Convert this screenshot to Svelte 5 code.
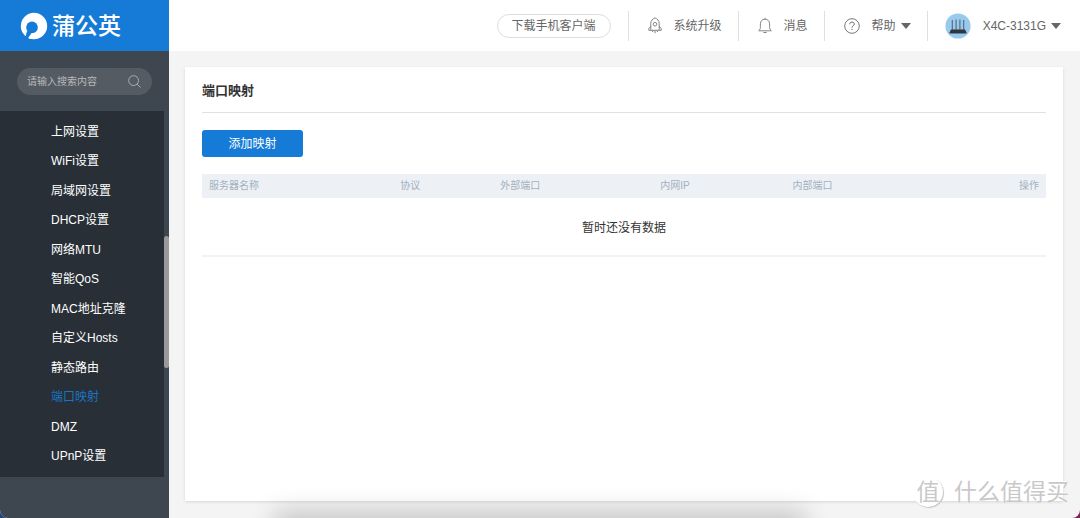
<script>
    let keyword = $state("")
    let active = $state("端口映射")

    const menu = [
        "上网设置", "WiFi设置", "局域网设置", "DHCP设置", "网络MTU", "智能QoS",
        "MAC地址克隆", "自定义Hosts", "静态路由", "端口映射", "DMZ", "UPnP设置"
    ]

    const columns = [
        { title: "服务器名称", key: "name" },
        { title: "协议", key: "protocol" },
        { title: "外部端口", key: "outer" },
        { title: "内网IP", key: "ip" },
        { title: "内部端口", key: "inner" },
        { title: "操作", key: "action" }
    ]
</script>

<div class="app">
    <aside class="sidebar">
        <a class="logo" href="#home">
            <svg viewBox="0 0 28 28" width="28" height="28">
                <circle cx="14" cy="14" r="13.2" fill="#fff" />
                <path d="M6.6 28 L5.6 24.4 L7 19 L12 20.5 L10.2 23 L8.6 25.2 L8 28 Z" fill="#157bd7" />
                <circle cx="12" cy="15.4" r="5.8" fill="#157bd7" />
                <path d="M8.2 26 C10.6 25 11.8 23.4 11.9 21.1 L15 21 L14 26 L10 27 Z" fill="#fff" />
            </svg>
            <span>蒲公英</span>
        </a>

        <form class="search" onsubmit={e => e.preventDefault()}>
            <input type="text" placeholder="请输入搜索内容" aria-label="搜索" bind:value={keyword} />
            <button type="submit" aria-label="搜索">
                <svg viewBox="0 0 13 13" width="13" height="13" fill="none" stroke="#a9adb1">
                    <circle cx="5.6" cy="5.6" r="4.9" />
                    <path d="M9.1 9.1 L12.5 12.5" />
                </svg>
            </button>
        </form>

        <ul class="menu">
            {#each menu as item}
                <li>
                    <a href="#{item}" class:active={active === item} onclick={() => active = item}>{item}</a>
                </li>
            {/each}
        </ul>
        <div class="scroll-thumb"></div>
    </aside>

    <div class="content">
        <header class="topbar">
            <button class="download">下载手机客户端</button>
            <a class="item" href="#upgrade">
                <svg viewBox="0 0 14 17" width="14" height="17" fill="none" stroke="#777" stroke-width="0.9">
                    <path d="M2.8 12.9 V6.3 C2.8 3.8 4.8 1.8 7 0.9 C9.2 1.8 11.2 3.8 11.2 6.3 V12.9" />
                    <path d="M2.8 9.2 L0.8 11.5 V13.3 H13.2 V11.5 L11.2 9.2" />
                    <circle cx="7" cy="7.2" r="1.8" />
                    <path d="M4.6 13.5 V15 M7 13.5 V16.3 M9.4 13.5 V15" />
                </svg>
                <span>系统升级</span>
            </a>
            <a class="item" href="#message">
                <svg viewBox="0 0 14 17" width="14" height="17" fill="none" stroke="#777" stroke-width="0.9">
                    <path d="M0.6 13.8 H13.4 M0.8 13.6 C2.2 12.6 2.4 11.4 2.4 9.4 V6.8 C2.4 4 4.4 2.2 7 2.2 C9.6 2.2 11.6 4 11.6 6.8 V9.4 C11.6 11.4 11.8 12.6 13.2 13.6" />
                    <path d="M7 0.8 V2.2 M5.4 15.5 H8.6" />
                </svg>
                <span>消息</span>
            </a>
            <button class="item">
                <svg viewBox="0 0 16 16" width="16" height="16" fill="none" stroke="#666">
                    <circle cx="8" cy="8" r="7.3" stroke-width="0.9" />
                    <path d="M5.7 6.3 C5.7 4.9 6.7 4.1 8 4.1 C9.4 4.1 10.3 4.9 10.3 6.1 C10.3 7.6 8 7.8 8 9.6 M8 10.8 V12" />
                </svg>
                <span>帮助</span>
                <i class="caret"></i>
            </button>
            <button class="item device">
                <svg viewBox="0 0 26 26" width="26" height="26">
                    <circle cx="13" cy="13" r="12.6" fill="#98caee" />
                    <path d="M7.3 7 V17 M11.1 6.6 V17 M14.9 6.6 V17 M18.7 7 V17" stroke="#53697c" stroke-width="1.1" />
                    <path d="M6 16.5 H20 L21.4 19.2 V20.6 H4.6 V19.2 Z" fill="#30363e" />
                </svg>
                <span>X4C-3131G</span>
                <i class="caret"></i>
            </button>
        </header>

        <main class="panel">
            <h1>端口映射</h1>
            <button class="add">添加映射</button>
            <table>
                <thead>
                    <tr>
                        {#each columns as col}
                            <th class={col.key}>{col.title}</th>
                        {/each}
                    </tr>
                </thead>
                <tbody>
                    <tr>
                        <td colspan={columns.length}>暂时还没有数据</td>
                    </tr>
                </tbody>
            </table>
        </main>
    </div>

    <div class="dock-shadow"></div>
    <div class="watermark">
        <span class="badge">值</span>
        <span>什么值得买</span>
    </div>
</div>

<style>
    :global(body){
        background: linear-gradient(90deg, #1d4480 50%, #7b2450 50%);
    }
    .app{
        position: relative;
        display: flex;
        min-height: 100vh;
        overflow: hidden;
        border-radius: 0 0 8px 8px;
        background-color: #f4f4f4;
        color: #666;
        font-family: "Liberation Sans", "Noto Sans CJK SC", sans-serif;
        font-size: 12px;
    }
    a{
        color: inherit;
        text-decoration: none;
    }
    button, input{
        padding: 0;
        border: none;
        background: none;
        color: inherit;
        font: inherit;
    }
    button{
        cursor: pointer;
    }
    svg{
        flex: none;
    }

    .sidebar{
        position: relative;
        flex: none;
        width: 169px;
        background-color: #3e464f;
    }
    .logo{
        display: flex;
        align-items: center;
        gap: 4px;
        height: 51px;
        padding-left: 20px;
        background-color: #157bd7;
        color: white;
        font-size: 23px;
        font-weight: 500;
        line-height: 32px;
    }
    .search{
        display: flex;
        align-items: center;
        height: 27px;
        margin: 17px 17px 16px;
        padding: 0 11px 0 10px;
        box-sizing: border-box;
        border-radius: 14px;
        background-color: #545b63;
        font-size: 10px;
    }
    .search input{
        flex: 1;
        min-width: 0;
        outline: none;
        color: white;
    }
    .search input::placeholder{
        color: #b6b9bc;
        opacity: 1;
    }
    .search button{
        display: flex;
    }
    .menu{
        display: grid;
        grid-auto-rows: 1fr;
        min-height: 366px;
        margin: 0 5px 0 0;
        padding: 6px 0;
        box-sizing: border-box;
        list-style: none;
        background-color: #282f36;
        color: white;
    }
    .menu li{
        display: flex;
        align-items: center;
        padding-left: 51px;
        line-height: 16px;
    }
    .menu .active{
        color: #1a75c6;
    }
    .scroll-thumb{
        position: absolute;
        top: 236px;
        right: 0;
        width: 5px;
        height: 132px;
        border-radius: 3px;
        background-color: #9a9a9a;
    }

    .content{
        flex: 1;
        min-width: 0;
        display: flex;
        flex-direction: column;
    }
    .topbar{
        display: flex;
        align-items: center;
        justify-content: flex-end;
        height: 51px;
        background-color: white;
        line-height: 16px;
    }
    .download{
        height: 24px;
        margin-right: 17px;
        padding: 0 14px;
        border: 1px solid #dedede;
        border-radius: 12px;
    }
    .item{
        display: flex;
        align-items: center;
        gap: 12px;
        height: 30px;
        padding: 0 16px 0 19px;
        border-left: 1px solid #e0e0e0;
        white-space: nowrap;
    }
    .device{
        padding: 0 19px 0 17px;
    }
    .caret{
        margin-left: -7px;
        border: 5px solid transparent;
        border-top: 6px solid #666;
        border-bottom: none;
    }

    .panel{
        flex: 1;
        margin: 16px 17px 17px 16px;
        padding: 0 17px;
        background-color: white;
        box-shadow: 0 1px 3px rgba(0, 0, 0, 0.12);
    }
    h1{
        margin: 0 0 17px;
        padding: 14px 0 11px;
        border-bottom: 1px solid #e1e1e1;
        color: #333;
        font-size: 13px;
        line-height: 20px;
    }
    .add{
        display: block;
        width: 101px;
        height: 27px;
        margin-bottom: 17px;
        border-radius: 3px;
        background-color: #157bd7;
        color: white;
        line-height: 16px;
    }
    table{
        width: 100%;
        table-layout: fixed;
        border-collapse: collapse;
    }
    th{
        height: 21px;
        padding: 0 7px 3px;
        background-color: #edf1f6;
        color: #a3b0be;
        font-size: 10px;
        font-weight: normal;
        text-align: left;
    }
    .name{
        width: 21%;
    }
    .protocol{
        width: 10.2%;
    }
    .outer{
        width: 17.3%;
    }
    .ip{
        width: 14%;
    }
    .action{
        text-align: right;
    }
    td{
        height: 57px;
        padding: 0;
        border-bottom: 2px solid #f3f3f3;
        color: #333;
        text-align: center;
    }

    /* glow of the dock under the window */
    .dock-shadow{
        position: absolute;
        top: 100%;
        left: 26%;
        right: 26%;
        height: 20px;
        box-shadow: 0 0 26px 6px rgba(0, 0, 0, 0.2);
        pointer-events: none;
    }
    .watermark{
        position: absolute;
        right: 11px;
        bottom: 10px;
        display: flex;
        align-items: center;
        gap: 11px;
        color: #c9c9c9;
        font-size: 23px;
        line-height: 32px;
        text-shadow: -1px -1px 0 white;
        pointer-events: none;
    }
    .badge{
        width: 30px;
        height: 30px;
        border-radius: 50%;
        background-color: white;
        box-shadow: 1px 1px 1px #c4c4c4;
        line-height: 30px;
        text-align: center;
    }
</style>
